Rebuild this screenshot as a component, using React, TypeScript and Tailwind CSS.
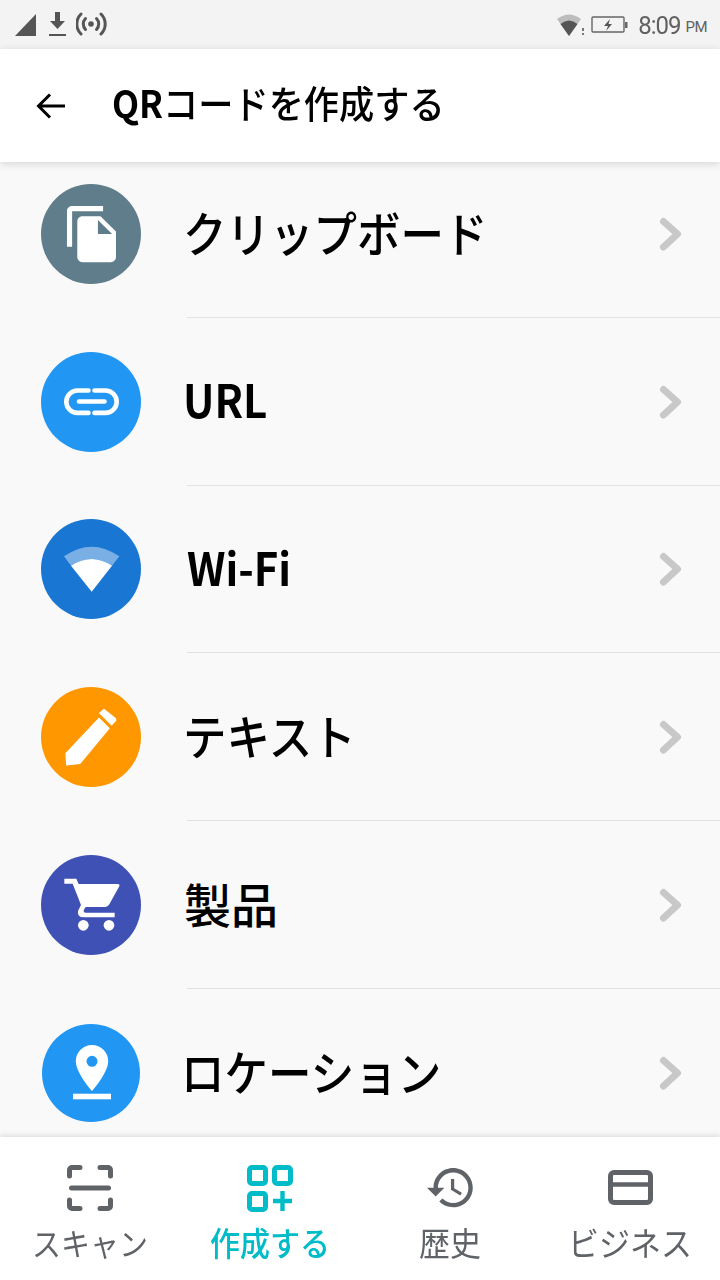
const Chevron = () => (
  <svg width="30" height="40" viewBox="0 0 30 40" className="mr-[34px] shrink-0">
    <path d="M7.5 7.5 L21.5 20 L7.5 33" fill="none" stroke="#c8c8c8" strokeWidth="7" strokeLinecap="round" strokeLinejoin="round" />
  </svg>
);

const ClipIcon = () => (
  <g transform="translate(20.8 19.5) scale(2.58 2.55)">
    <path
      fill="#fff"
      d="M16 1H4c-1.1 0-2 .9-2 2v14h2V3h12V1zm-1 4l6 6v10c0 1.1-.9 2-2 2H7.99C6.89 23 6 22.1 6 21l.01-14c0-1.1.89-2 1.99-2h7zm-1 7h5.5L14 6.5V12z"
    />
  </g>
);

const LinkIcon = () => (
  <g fill="none" stroke="#fff" strokeWidth="4.6" strokeLinecap="round">
    <path d="M47.5 38.5 H36.5 a11.2 11.2 0 0 0 0 22.4 H47.5" />
    <path d="M53.5 38.5 H64.5 a11.2 11.2 0 0 1 0 22.4 H53.5" />
    <path d="M38 49.5 H63.5" />
  </g>
);

const WifiIcon = () => (
  <g>
    <path fill="#fff" fillOpacity="0.42" d="M23 37.3 Q50.7 18 78.3 37.3 L71 46.7 Q50.7 33.3 30 46.7Z" />
    <path fill="#fff" d="M30 46.7 Q50.7 33.3 71 46.7 L50.7 72.7Z" />
  </g>
);

const PencilIcon = () => (
  <g fill="#fff" stroke="#fff" strokeWidth="1.2" strokeLinejoin="round">
    <path d="M25.7 78 L25 66.3 L58 31.3 L68 41.3 L39 76.3Z" />
    <path d="M58.8 26 L63 22.4 L74.6 31.6 L74.6 33.7 L70.6 37.8Z" />
  </g>
);

const CartIcon = () => (
  <g transform="translate(-21 -10) scale(0.3333)" fill="#fff">
    <path d="M133 101 H169 L176 117 H293 Q300 117 298 124 L268 178 Q264 186 256 186 H197 L191 196 Q190 203 196 203 H284 V217 H190 Q172 217 174 198 L183 180 L158 116 H133Z" />
    <circle cx="190" cy="241" r="16" />
    <circle cx="267" cy="241" r="16" />
  </g>
);

const PinIcon = () => (
  <g fill="#fff">
    <path
      fillRule="evenodd"
      d="M50 67 C50 67 33.8 49 33.8 37.3 A16.2 16.2 0 0 1 66.2 37.3 C66.2 49 50 67 50 67Z M50 31.8 A5.5 5.5 0 1 0 50 42.8 A5.5 5.5 0 1 0 50 31.8Z"
    />
    <rect x="31" y="69.7" width="38" height="5.6" />
  </g>
);

const rows = [
  { label: "クリップボード", icon: <ClipIcon />, color: "bg-[#607d8b]", size: "w-[100px] h-[100px] ml-[41px]", textCls: "ml-[42px] text-[43.5px] font-medium scale-y-[1.1]" },
  { label: "URL", icon: <LinkIcon />, color: "bg-[#2196f3]", size: "w-[100px] h-[100px] ml-[41px]", textCls: "ml-[42px] text-[42px] font-bold scale-y-[1.08]" },
  { label: "Wi-Fi", icon: <WifiIcon />, color: "bg-[#1976d2]", size: "w-[100px] h-[100px] ml-[41px]", textCls: "ml-[46px] text-[42px] font-bold scale-y-[1.08]" },
  { label: "テキスト", icon: <PencilIcon />, color: "bg-[#ff9800]", size: "w-[100px] h-[100px] ml-[41px]", textCls: "ml-[42px] text-[43.5px] font-medium scale-y-[1.1]" },
  { label: "製品", icon: <CartIcon />, color: "bg-[#3f51b5]", size: "w-[100px] h-[100px] ml-[41px]", textCls: "ml-[43px] text-[47px] font-medium" },
  { label: "ロケーション", icon: <PinIcon />, color: "bg-[#2196f3]", size: "w-[98px] h-[98px] ml-[42px]", textCls: "ml-[41px] text-[43.5px] font-medium scale-y-[1.1]" },
];

const StatusLeft = () => (
  <div className="flex items-center ml-[15px] blur-[0.4px]">
    <svg width="22" height="24" viewBox="0 0 22 24">
      <path d="M0 23 L21 1 V23Z" fill="#555" />
    </svg>
    <svg width="20" height="26" viewBox="0 0 20 26" className="ml-[11px]">
      <path d="M7 0 H12 V9 H17 L9.5 17 L2 9 H7Z M1 22 H18 V24 H1Z" fill="#555" />
    </svg>
    <svg width="32" height="26" viewBox="0 0 32 26" className="ml-[8px]" fill="none" stroke="#555" strokeWidth="3" strokeLinecap="round">
      <circle cx="15" cy="12" r="2.8" fill="#555" stroke="none" />
      <path d="M9.5 6.5 a8 8 0 0 0 0 11" />
      <path d="M20.5 6.5 a8 8 0 0 1 0 11" />
      <path d="M5 2 a14 14 0 0 0 0 20" />
      <path d="M25 2 a14 14 0 0 1 0 20" />
    </svg>
  </div>
);

const StatusRight = () => (
  <div className="flex items-center mr-[13px]">
    <svg width="28" height="24" viewBox="0 0 28 24" className="blur-[0.3px]">
      <path d="M0 6 Q12 -3 24 6 L12 23Z" fill="#bdbdbd" />
      <path d="M3.5 11 Q12 4 20.5 11 L12 23Z" fill="#555" />
      <path d="M25 15 h2 v3 h-2z M25 20 h2 v2 h-2z" fill="#777" />
    </svg>
    <svg width="37" height="18" viewBox="0 0 37 18" className="ml-[6px]">
      <rect x="1" y="1" width="32" height="15" rx="1" fill="none" stroke="#666" strokeWidth="1.4" />
      <rect x="34" y="6" width="2.5" height="6" fill="#666" />
      <path d="M19 3 L13 10 H17 L15 15 L21 8 H17.5Z" fill="#555" />
    </svg>
    <span className="ml-[10px] text-[24px] leading-none tracking-[-1px] scale-y-[1.08] text-[#616161] font-['Roboto',sans-serif]">8:09</span>
    <span className="ml-[5px] text-[15px] leading-none tracking-[-0.5px] text-[#616161] mt-[6px] font-['Roboto',sans-serif]">PM</span>
  </div>
);

const ScanGlyph = () => (
  <g fill="none" stroke="#5f6368" strokeWidth="5" strokeLinecap="round" strokeLinejoin="round">
    <path d="M9.5 18 V12 a2.5 2.5 0 0 1 2.5 -2.5 H20" />
    <path d="M50.5 18 V12 a2.5 2.5 0 0 0 -2.5 -2.5 H40" />
    <path d="M9.5 42 V48 a2.5 2.5 0 0 0 2.5 2.5 H20" />
    <path d="M50.5 42 V48 a2.5 2.5 0 0 1 -2.5 2.5 H40" />
    <path d="M11.5 30 H48.5" />
  </g>
);

const CreateGlyph = () => (
  <g fill="none" stroke="#00bcc9" strokeWidth="5">
    <rect x="9.5" y="9.5" width="16" height="16" rx="2.5" />
    <rect x="34.5" y="9.5" width="16" height="16" rx="2.5" />
    <rect x="9.5" y="35.5" width="16" height="16" rx="2.5" />
    <path d="M33 43 H52 M42.5 33 V53" strokeWidth="4.4" />
  </g>
);

const HistoryGlyph = () => (
  <g transform="translate(4.8 3.5) scale(2.18)">
    <path
      fill="#5f6368"
      d="M13 3c-4.97 0-9 4.03-9 9H1l3.89 3.89.07.14L9 12H6c0-3.87 3.13-7 7-7s7 3.13 7 7-3.13 7-7 7c-1.93 0-3.68-.79-4.94-2.06l-1.42 1.42C8.27 19.99 10.51 21 13 21c4.97 0 9-4.03 9-9s-4.03-9-9-9zm-1 5v5l4.28 2.54.72-1.21-3.5-2.08V8H12z"
    />
  </g>
);

const CardGlyph = () => (
  <g fill="none" stroke="#5f6368" strokeWidth="5">
    <rect x="10.5" y="14.5" width="40" height="30" rx="3.5" />
    <path d="M10.5 26.5 H50.5" strokeWidth="4.4" />
  </g>
);

const tabs = [
  { label: "スキャン", glyph: <ScanGlyph />, active: false, textCls: "text-[29px]" },
  { label: "作成する", glyph: <CreateGlyph />, active: true, textCls: "text-[30px]" },
  { label: "歴史", glyph: <HistoryGlyph />, active: false, textCls: "text-[31px]" },
  { label: "ビジネス", glyph: <CardGlyph />, active: false, textCls: "text-[31px]" },
];

const App = () => {
  return (
    <div className="w-[720px] h-[1280px] flex flex-col overflow-hidden bg-[#f9f9f9] font-['Noto_Sans_CJK_JP',sans-serif]">
      <div className="h-[49px] shrink-0 flex items-center justify-between bg-[#f3f3f3]">
        <StatusLeft />
        <StatusRight />
      </div>

      <div className="relative z-10 h-[113px] shrink-0 flex items-center bg-white shadow-[0_2px_8px_rgba(0,0,0,0.14)]">
        <svg width="32" height="32" viewBox="0 0 32 32" className="ml-[35px] shrink-0">
          <path d="M30 16 H4 M15 4.5 L3.5 16 L15 27.5" fill="none" stroke="#000" strokeWidth="3" />
        </svg>
        <h1 className="ml-[45px] mb-[8px] text-[35.2px] leading-none font-medium text-black scale-y-[1.08]">
          <span className="font-bold">QR</span>コードを作成する
        </h1>
      </div>

      <div className="flex-1 overflow-hidden -mt-[12px]">
        {rows.map((row, i) => (
          <div key={row.label} className="relative h-[167.8px] flex items-center">
            <div className={`${row.size} shrink-0 rounded-full ${row.color}`}>
              <svg width="100%" height="100%" viewBox={i === 5 ? "0 0 98 98" : "0 0 100 100"}>
                {row.icon}
              </svg>
            </div>
            <span className={`${row.textCls} mb-[5px] flex-1 leading-none text-black`}>
              {row.label}
            </span>
            <Chevron />
            {i < 5 && <div className="absolute left-[187px] right-0 bottom-[0px] h-px bg-[#e2e2e2]" />}
          </div>
        ))}
      </div>

      <div className="relative z-10 h-[143px] shrink-0 grid grid-cols-4 bg-white shadow-[0_-1px_6px_rgba(0,0,0,0.14)]">
        {tabs.map((tab) => (
          <div key={tab.label} className="flex flex-col items-center pt-[21px]">
            <svg width="60" height="60" viewBox="0 0 60 60">
              {tab.glyph}
            </svg>
            <span className={`mt-[4px] ${tab.textCls} leading-[40px] scale-y-[1.08] ${tab.active ? "text-[#00bcc9] font-medium" : "text-[#5f6368]"}`}>
              {tab.label}
            </span>
          </div>
        ))}
      </div>
    </div>
  );
};

export default App;
